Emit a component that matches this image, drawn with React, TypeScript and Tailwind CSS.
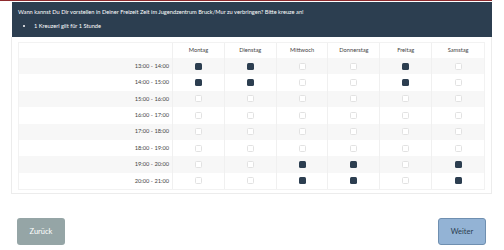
import React from 'react';

const days = ['Montag', 'Dienstag', 'Mittwoch', 'Donnerstag', 'Freitag', 'Samstag'];

const slots: { label: string; checked: number[] }[] = [
  { label: '13:00 - 14:00', checked: [0, 1, 4] },
  { label: '14:00 - 15:00', checked: [0, 1, 4] },
  { label: '15:00 - 16:00', checked: [] },
  { label: '16:00 - 17:00', checked: [] },
  { label: '17:00 - 18:00', checked: [] },
  { label: '18:00 - 19:00', checked: [] },
  { label: '19:00 - 20:00', checked: [2, 3, 5] },
  { label: '20:00 - 21:00', checked: [2, 3, 5] },
];

const Box: React.FC<{ on: boolean }> = ({ on }) =>
  on ? (
    <span className="block w-[7px] h-[7px] rounded-[1.5px] bg-[#2c3e50]" />
  ) : (
    <span className="block w-[7px] h-[7px] rounded-[1.5px] border border-[#e2e2e2] bg-white" />
  );

const App: React.FC = () => {
  return (
    <div
      className="w-[504px] h-[250px] bg-white overflow-hidden text-[#333]"
      style={{ fontFamily: 'Lato, "Open Sans", sans-serif' }}
    >
      <div className="w-[492px] h-px bg-[#8e2b2e]" />

      <div className="ml-[12px] w-[480px]">
        {/* question panel */}
        <div className="mt-px h-[35px] bg-[#2c3e50] text-white px-[6px] pt-[6px]">
          <p className="text-[5.7px] leading-[8px]">
            Wann kannst Du Dir vorstellen in Deiner Freizeit Zeit im Jugendzentrum Bruck/Mur zu verbringen? Bitte kreuze an!
          </p>
          <ul className="mt-[6px] pl-[16px] list-disc text-[5.7px] leading-[8px]">
            <li>1 Kreuzerl gilt für 1 Stunde</li>
          </ul>
        </div>

        {/* table card */}
        <div className="border border-t-0 border-[#ececec] px-[6px] pt-[5px] pb-[3px] -ml-px">
          <div className="border border-[#f2f2f2] w-[467px]">
            <div className="grid grid-cols-[154px_repeat(6,minmax(0,1fr))] h-[15px] text-[5.7px] text-[#444]">
              <div className="border-r border-[#f0f0f0]" />
              {days.map((d) => (
                <div key={d} className="flex items-center justify-center border-r border-[#f0f0f0] last:border-r-0">
                  {d}
                </div>
              ))}
            </div>
            {slots.map((s, i) => (
              <div
                key={s.label}
                className={`grid grid-cols-[154px_repeat(6,minmax(0,1fr))] h-[16.4px] text-[5.7px] text-[#444] ${
                  i % 2 === 0 ? 'bg-[#f7f7f7]' : 'bg-white'
                }`}
              >
                <div className="flex items-center justify-end pr-[3px] border-r border-[#f0f0f0]">{s.label}</div>
                {days.map((d, j) => (
                  <div key={d} className="flex items-center justify-center border-r border-[#f0f0f0] last:border-r-0">
                    <Box on={s.checked.includes(j)} />
                  </div>
                ))}
              </div>
            ))}
          </div>
        </div>
      </div>

      {/* navigation */}
      <div className="mt-[24px] pl-[17px] pr-[18px] flex justify-between">
        <button className="w-[48px] h-[27px] rounded-[3px] bg-[#95a5a6] text-white text-[7.5px]">Zurück</button>
        <button className="w-[48px] h-[27px] rounded-[3px] bg-[#93b3d5] border border-[#6f8fb0] text-[#2c3e50] text-[7.5px]">
          Weiter
        </button>
      </div>
    </div>
  );
};

export default App;
